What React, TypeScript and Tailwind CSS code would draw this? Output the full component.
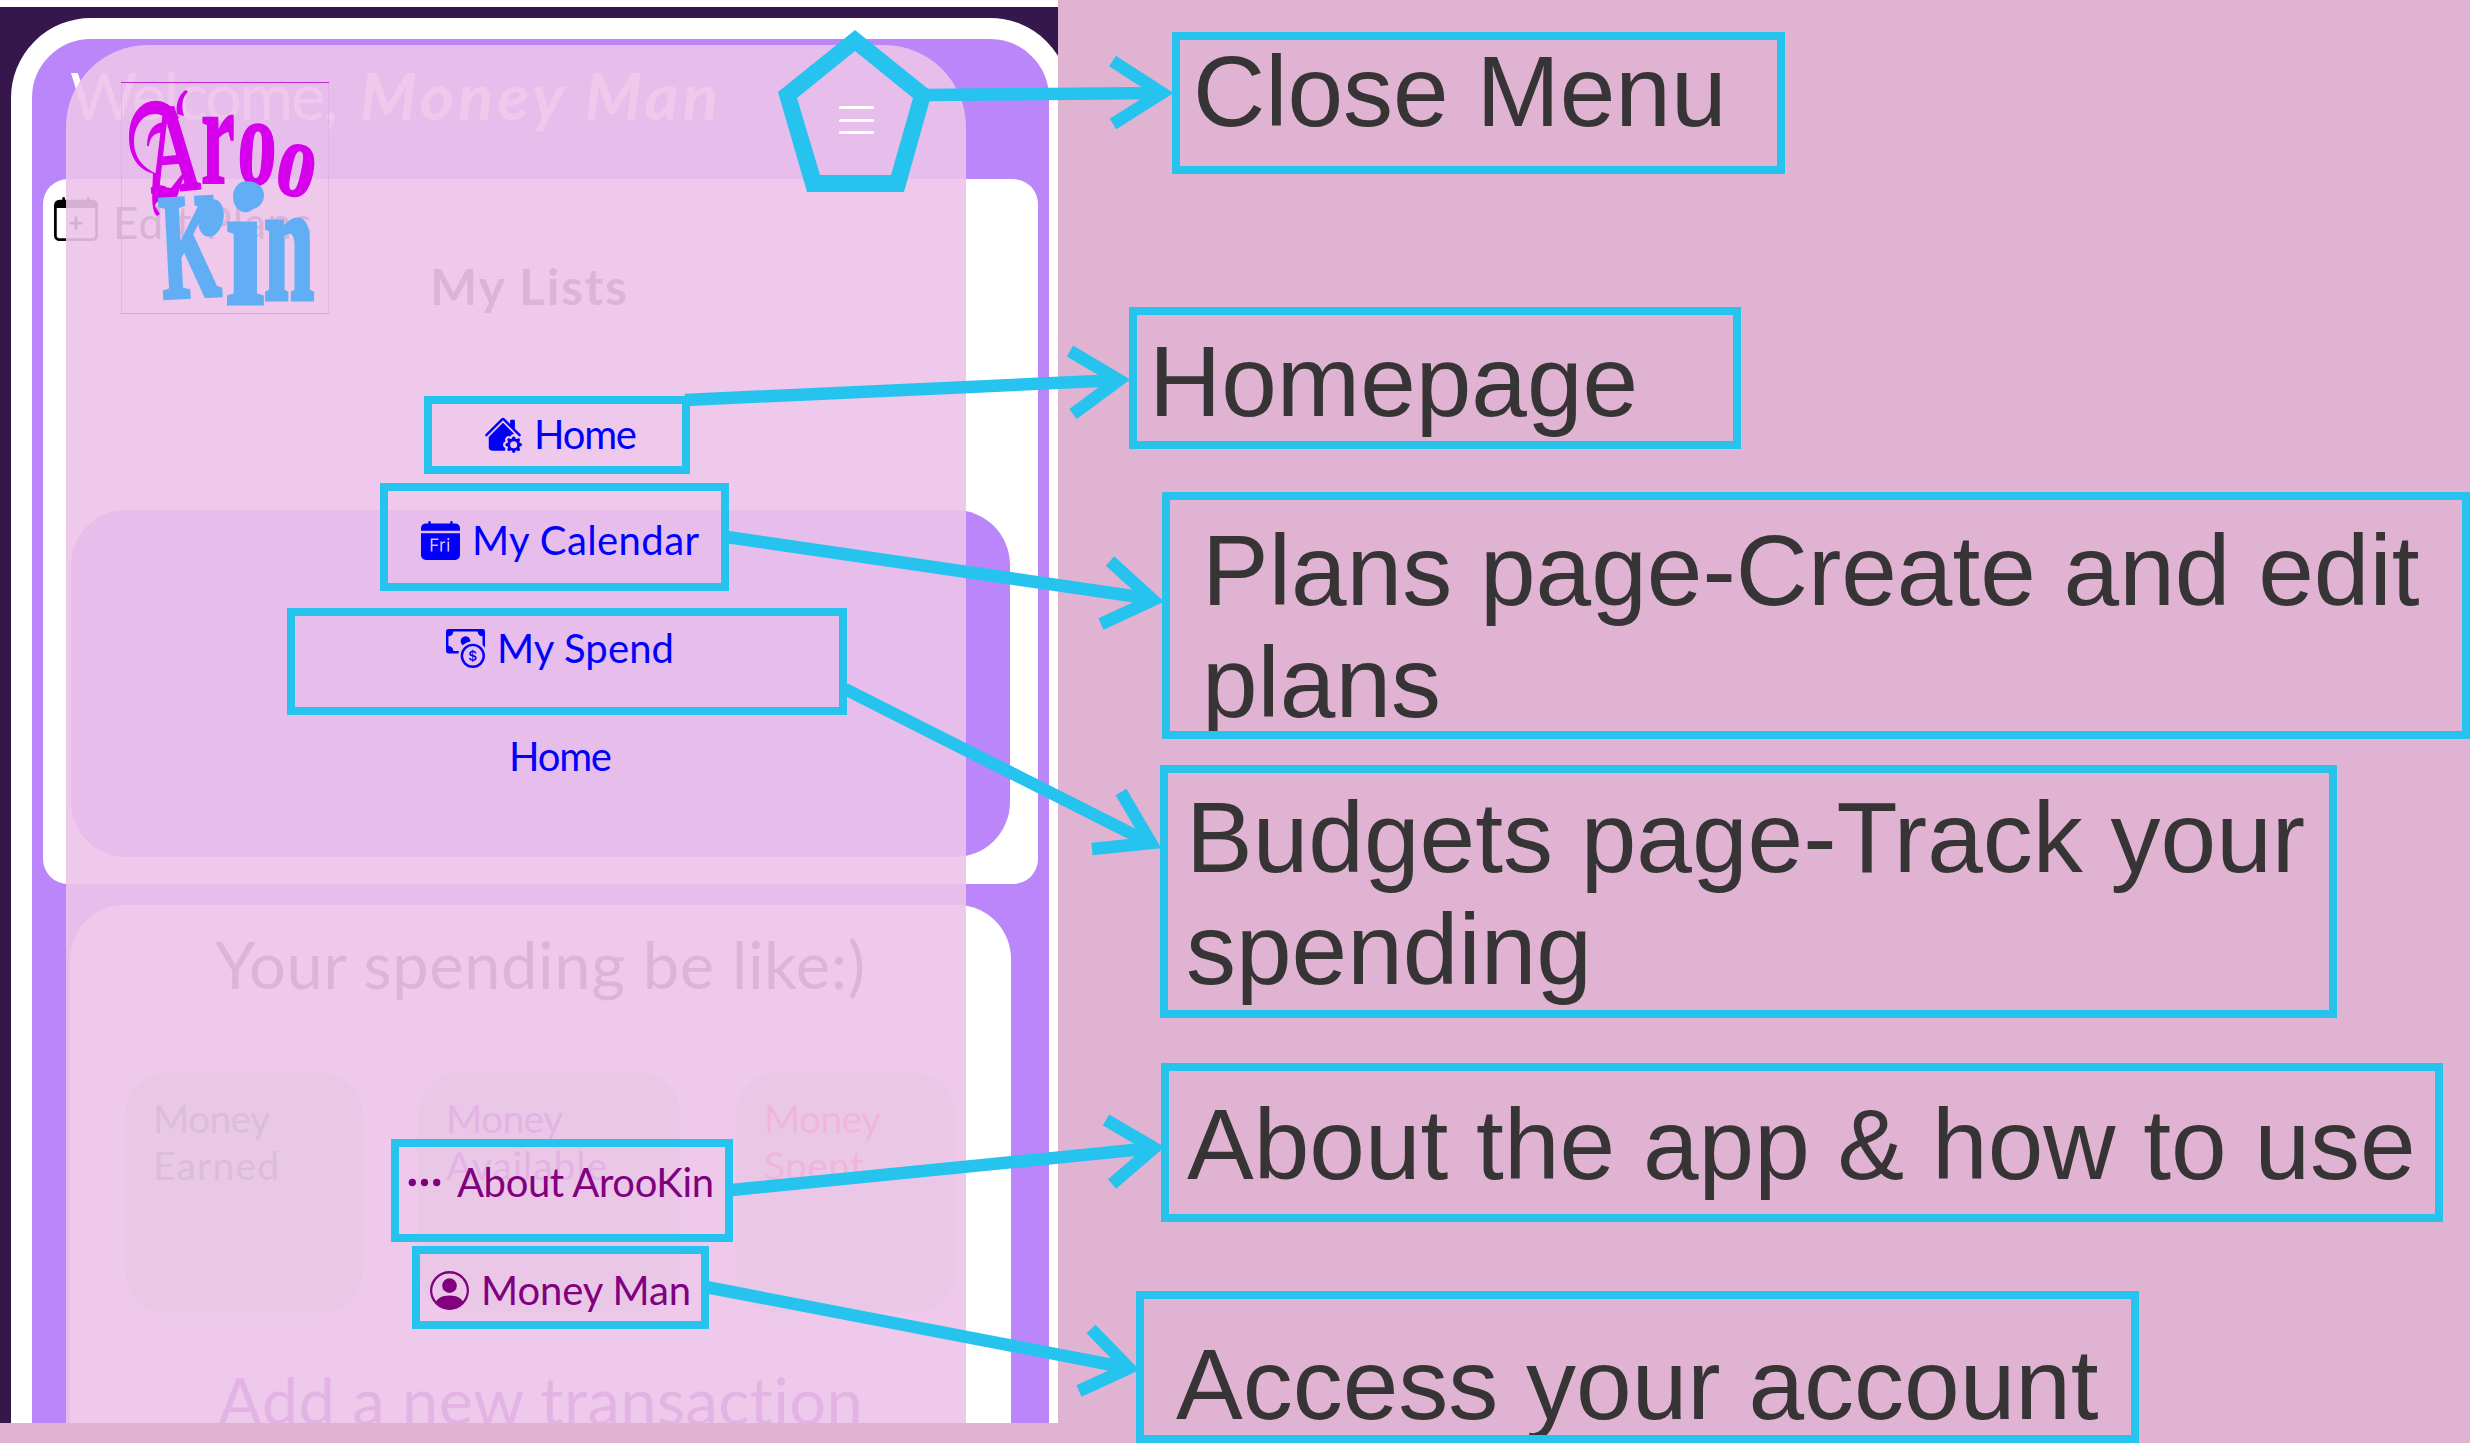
import { useLayoutEffect, useRef, useState } from "react";
import type { ReactNode } from "react";
import {
  BsCalendarDayFill,
  BsCalendarPlus,
  BsCashCoin,
  BsHouseGearFill,
  BsPersonCircle,
  BsThreeDots,
} from "react-icons/bs";

/* One line of text whose tracking is adjusted so that it spans a given width. */
function FitText({ text, width, className = "" }: { text: string; width: number; className?: string }) {
  const ref = useRef<HTMLSpanElement>(null);
  const [spacing, setSpacing] = useState(0);
  useLayoutEffect(() => {
    if (!ref.current) return;
    const natural = ref.current.getBoundingClientRect().width - spacing * text.length;
    setSpacing((width - natural) / (text.length - 1));
  }, [text, width]);
  return (
    <span ref={ref} className={`inline-block shrink-0 translate-y-[0.06em] whitespace-pre leading-none ${className}`} style={{ letterSpacing: spacing }}>
      {text}
    </span>
  );
}

function Logo() {
  return (
    <svg viewBox="0 0 208 232" className="ml-[55px] h-[232px] w-[208px] shrink-0" fontFamily="'Liberation Serif', serif" fontWeight="700" fontSize="100">
      <rect x="0.5" y="0.5" width="207" height="231" fill="none" stroke="#e6a4e8" strokeOpacity="0.6" />
      <path d="M0 .5H208" stroke="#c02ad0" />
      <path d="M0 231.5H208" stroke="#e59be9" />
      <g fill="#d600ec">
        <path d="M58 36C46 8 8 14 8 56C8 76 20 91 36 92C22 86 13 75 13 60C13 36 32 24 48 38Z" />
        <path d="M56 32C54 20 60 10 65 8L67 10C61 15 60 24 63 34Z" />
        <path d="M32 91L35 91L36 104L50 106L61 92L63 94L54 121C44 117 35 118 34 124L39 132L36 134C30 128 31 115 32 91Z" />
        <path d="M26 64C26 48 34 40 44 40L42 51C34 50 29 55 28 64Z" />
        <g stroke="#d600ec" strokeWidth="1.5">
          <text transform="translate(30 111) rotate(-5) scale(.7 1.27)">A</text>
          <text transform="translate(80 101) scale(.76 1.42)">r</text>
          <text transform="translate(115 101) rotate(3) scale(.78 1.27)">o</text>
          <text transform="translate(151 109) rotate(12) scale(.78 1.08)">o</text>
        </g>
      </g>
      <g fill="#62aef5">
        <ellipse cx="90" cy="136" rx="12.500" ry="19" transform="rotate(12 90 136)" />
        <ellipse cx="128.500" cy="113.500" rx="14.500" ry="14" />
        <g stroke="#62aef5" strokeWidth="3">
          <text transform="translate(42 216) rotate(-3) scale(.76 1.5)">K</text>
          <text transform="translate(105 221) scale(1.36 1.72)">i</text>
          <text transform="translate(143 217) scale(.9 1.68)">n</text>
        </g>
      </g>
    </svg>
  );
}

function MenuItem({ icon, text, width, box, inner, color }: { icon: ReactNode; text: string; width: number; box: string; inner: string; color: string }) {
  return (
    <div className={`flex shrink-0 items-start border-8 border-[#25c3ee] ${box} ${inner} ${color}`}>
      <span className="mt-[3px] shrink-0">{icon}</span>
      <FitText text={text} width={width} className="text-[40px]" />
    </div>
  );
}

function Menu() {
  return (
    <nav className="absolute left-[66px] top-[45px] flex h-[1400px] w-[900px] flex-col rounded-t-[82px] bg-[#ecc3ea]/90 pt-[37px]">
      <button aria-label="Close menu" className="absolute left-[773px] top-[61px] flex h-[28px] w-[35px] flex-col justify-between">
        <span className="h-[3px] w-full rounded-full bg-white" />
        <span className="h-[3px] w-full rounded-full bg-white" />
        <span className="h-[3px] w-full rounded-full bg-white" />
      </button>
      <Logo />
      <MenuItem icon={<BsHouseGearFill size={38} />} text="Home" width={103} box="ml-[358px] mt-[82px] h-[78px] w-[266px]" inner="gap-[12px] pl-[52px] pt-[8px]" color="text-[#0000fb]" />
      <MenuItem icon={<BsCalendarDayFill size={39} />} text="My Calendar" width={227} box="ml-[314px] mt-[9px] h-[108px] w-[349px]" inner="gap-[12px] pl-[33px] pt-[27px]" color="text-[#0000fb]" />
      <MenuItem icon={<BsCashCoin size={39} />} text="My Spend" width={177} box="ml-[221px] mt-[17px] h-[107px] w-[560px]" inner="gap-[12px] pl-[151px] pt-[10px]" color="text-[#0000fb]" />
      <FitText text="Home" width={103} className="ml-[443px] mt-[19px] self-start text-[40px] text-[#0000fb]" />
      <MenuItem icon={<BsThreeDots size={39} />} text="About ArooKin" width={257} box="ml-[325px] mt-[365px] h-[103px] w-[342px]" inner="gap-[13px] pl-[6px] pt-[13px]" color="text-[#800080]" />
      <MenuItem icon={<BsPersonCircle size={39} />} text="Money Man" width={210} box="ml-[346px] mt-[4px] h-[83px] w-[297px]" inner="gap-[12px] pl-[10px] pt-[14px]" color="text-[#800080]" />
    </nav>
  );
}

function MoneyCard({ lines, box }: { lines: [string, number][]; box: string }) {
  return (
    <div className={`flex h-[241px] shrink-0 flex-col items-start rounded-[42px] bg-[#d2e4ce] pl-[28px] pt-[25px] ${box}`}>
      {lines.map(([text, width]) => (
        <FitText key={text} text={text} width={width} className="mb-[8px] text-[39px]" />
      ))}
    </div>
  );
}

function Phone() {
  return (
    <section className="relative h-[1423px] w-[1058px] shrink-0 overflow-hidden bg-white pt-[7px] font-['Lato',sans-serif]">
      <div className="h-[1416px] bg-[#35174c] pl-[11px] pt-[11px]">
        <div className="h-[1500px] w-[1059px] rounded-[80px] border-[21px] border-white bg-[#bb86fa]">
          <div className="ml-[38px] mt-[20px] flex h-[65px] items-start gap-[24px] text-[65px] text-white">
            <FitText text="Welcome," width={268} />
            <FitText text="Money Man" width={358} className="font-bold italic" />
          </div>
          <div className="ml-[11px] mt-[55px] h-[705px] w-[995px] rounded-[25px] bg-white pt-[18px]">
            <div className="ml-[11px] flex h-[44px] items-start gap-[15px] text-[44px] text-black">
              <BsCalendarPlus size={44} />
              <FitText text="Edit Plans" width={199} className="text-[#222]" />
            </div>
            <FitText text="My Lists" width={197} className="ml-[387px] mt-[17px] text-[50px] font-bold text-[#333]" />
            <div className="ml-[28px] mt-[202px] h-[347px] w-[939px] rounded-[55px] bg-[#bb86fa]" />
          </div>
          <div className="ml-[38px] mt-[21px] h-[700px] w-[941px] rounded-[54px] bg-white pt-[23px]">
            <FitText text="Your spending be like:)" width={650} className="ml-[145px] block text-[65px] text-[#333]" />
            <div className="ml-[55px] mt-[79px] flex gap-[55px]">
              <MoneyCard box="w-[238px] text-[#2a8a4a]" lines={[["Money", 117], ["Earned", 126]]} />
              <MoneyCard box="w-[263px] text-[#9020b0]" lines={[["Money", 117], ["Available", 161]]} />
              <MoneyCard box="w-[220px] text-[#ff4060]" lines={[["Money", 117], ["Spent", 100]]} />
            </div>
            <FitText text="Add a new transaction" width={646} className="ml-[148px] mt-[51px] block text-[65px] text-[#8020a0]" />
          </div>
        </div>
      </div>
      <Menu />
    </section>
  );
}

function Caption({ children, box }: { children: ReactNode; box: string }) {
  return (
    <div className={`shrink-0 overflow-hidden whitespace-nowrap border-8 border-[#25c3ee] ${box}`}>
      {children}
    </div>
  );
}

function Captions() {
  return (
    <section className="flex w-[1412px] flex-col pt-[32px] font-['Liberation_Sans',Arial,sans-serif] text-[100px] leading-[111.5px] text-[#373435]">
      <Caption box="ml-[114px] h-[142px] w-[613px] pl-[13px]"><p className="-mt-1">Close Menu</p></Caption>
      <Caption box="ml-[71px] mt-[133px] h-[142px] w-[612px] pl-[12px] pt-[11px]">Homepage</Caption>
      <Caption box="ml-[104px] mt-[43px] h-[247px] w-[1308px] pl-[32px] pt-[15px]">Plans page-Create and edit<br />plans</Caption>
      <Caption box="ml-[102px] mt-[26px] h-[253px] w-[1177px] pl-[18px] pt-[9px]">Budgets page-Track your<br />spending</Caption>
      <Caption box="ml-[103px] mt-[45px] h-[159px] w-[1282px] pl-[18px] pt-[18px]">About the app &amp; how to use</Caption>
      <Caption box="ml-[78px] mt-[69px] h-[152px] w-[1003px] pl-[32px] pt-[30px]">Access your account</Caption>
    </section>
  );
}

/* Connectors from each menu entry to its caption, and the marker round the close button. */
function Arrows() {
  return (
    <svg viewBox="0 0 2470 1443" className="pointer-events-none absolute left-0 top-0 h-[1443px] w-[2470px]" fill="none" stroke="#25c3ee" strokeWidth="12.5">
      <path d="M855 30L932 92L904 192H807L778 92ZM855 51L797 98L820 175H891L913 98Z" fill="#25c3ee" fillRule="evenodd" stroke="none" />
      <path d="M925 95L1162 93M1112.500 61L1162 93L1113 124" />
      <path d="M685 400L1120 380M1070 351L1119 380L1073 414" />
      <path d="M727 537L1153 599M1110 561L1153 600L1101 624" />
      <path d="M845 689L1150 843M1121 792L1151 843L1092 849" />
      <path d="M732 1190L1153 1148M1106 1120L1154 1148L1112 1184" />
      <path d="M706 1287L1128 1368M1091 1329L1129 1368L1079 1391" />
    </svg>
  );
}

export default function App() {
  return (
    <main className="relative flex h-[1443px] w-[2470px] items-start overflow-hidden bg-[#e0b3d2]">
      <Phone />
      <Captions />
      <Arrows />
    </main>
  );
}
